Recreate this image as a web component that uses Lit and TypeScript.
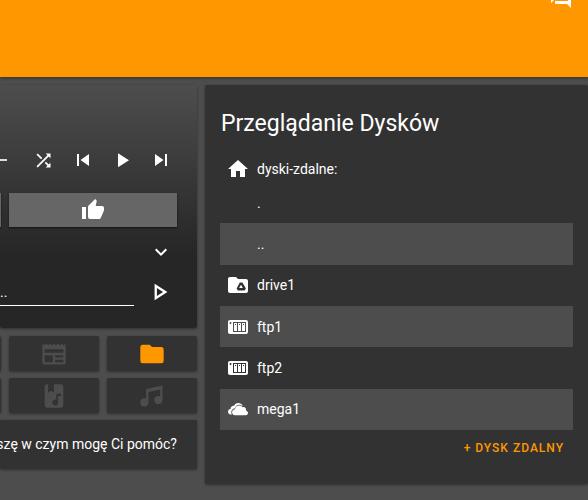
import { LitElement, html, css, svg, nothing } from "lit";
import { customElement, property } from "lit/decorators.js";

const ICONS: Record<string, string> = {
  shuffle:
    "M14.83,13.41L13.42,14.82L16.55,17.95L14.5,20H20V14.5L17.96,16.54L14.83,13.41M14.5,4L16.54,6.04L4,18.59L5.41,20L17.96,7.46L20,9.5V4M10.59,9.17L5.41,4L4,5.41L9.17,10.58L10.59,9.17Z",
  previous: "M6,18V6H8V18H6M9.5,12L18,6V18L9.5,12Z",
  play: "M8,5.14V19.14L19,12.14L8,5.14Z",
  next: "M16,18H18V6H16M6,18L14.5,12L6,6V18Z",
  thumbUp:
    "M23,10C23,8.89 22.1,8 21,8H14.68L15.64,3.43C15.66,3.33 15.67,3.22 15.67,3.11C15.67,2.7 15.5,2.32 15.23,2.05L14.17,1L7.59,7.58C7.22,7.95 7,8.45 7,9V19A2,2 0 0,0 9,21H18C18.83,21 19.54,20.5 19.84,19.78L22.86,12.73C22.95,12.5 23,12.26 23,12V10M1,21H5V9H1V21Z",
  chevron: "M7.41,8.58L12,13.17L16.59,8.58L18,10L12,16L6,10L7.41,8.58Z",
  playOutline: "M8.5,8.64L13.77,12L8.5,15.36V8.64M6.5,5V19L17.5,12",
  newspaper:
    "M20 11H4V8H20M20 15H13V13H20M20 19H13V17H20M11 19H4V13H11M20.33 4.67L18.67 3L17 4.67L15.33 3L13.67 4.67L12 3L10.33 4.67L8.67 3L7 4.67L5.33 3L3.67 4.67L2 3V19C2 20.11 2.9 21 4 21H20C21.11 21 22 20.11 22 19V3L20.33 4.67Z",
  folder:
    "M10,4H4C2.89,4 2,4.89 2,6V18A2,2 0 0,0 4,20H20A2,2 0 0,0 22,18V8C22,6.89 21.1,6 20,6H12L10,4Z",
  bookMusic:
    "M18,22H6A2,2 0 0,1 4,20V4C4,2.89 4.9,2 6,2H7V9L9.5,7.5L12,9V2H18A2,2 0 0,1 20,4V20A2,2 0 0,1 18,22M14,10V15.3A2.5,2.5 0 1,0 15.5,17.5V12H18V10Z",
  music:
    "M21,3V15.5A3.5,3.5 0 0,1 17.5,19A3.5,3.5 0 0,1 14,15.5A3.5,3.5 0 0,1 17.5,12C18.04,12 18.55,12.12 19,12.34V6.47L9,8.6V17.5A3.5,3.5 0 0,1 5.5,21A3.5,3.5 0 0,1 2,17.5A3.5,3.5 0 0,1 5.5,14C6.04,14 6.55,14.12 7,14.34V6L21,3Z",
  forum:
    "M15,4V11H5.17L4,12.17V4H15M16,2H3A1,1 0 0,0 2,3V17L6,13H16A1,1 0 0,0 17,12V3A1,1 0 0,0 16,2M21,6H19V15H6V17A1,1 0 0,0 7,18H18L22,22V7A1,1 0 0,0 21,6Z",
  home: "M10,20V14H14V20H19V12H22L12,3L2,12H5V20H10Z",
  drive:
    "M10,4H4C2.89,4 2,4.89 2,6V18A2,2 0 0,0 4,20H20A2,2 0 0,0 22,18V8C22,6.89 21.1,6 20,6H12L10,4M13.8,9.5H16.4L19.9,15.4L18.6,17.6H11.9L10.6,15.4ZM15,11.8L13.1,15H16.9Z",
  nas: "M4,5C2.89,5 2,5.89 2,7V17C2,18.11 2.89,19 4,19H20C21.11,19 22,18.11 22,17V7C22,5.89 21.11,5 20,5H4M4.5,7A1,1 0 0,1 5.5,8A1,1 0 0,1 4.5,9A1,1 0 0,1 3.5,8A1,1 0 0,1 4.5,7M7,7H20V17H7V7M8,8V16H11V8H8M12,8V16H15V8H12M16,8V16H19V8H16M9,9H10V10H9V9M13,9H14V10H13V9M17,9H18V10H17V9Z",
  cloud:
    "M20.08,13.64C21.17,13.81 22,14.75 22,15.89C22,17.16 21,18.18 19.7,18.18L9.08,18.17C7.42,18.17 6.08,16.82 6.08,15.16C6.08,13.56 7.34,12.25 8.93,12.16C9.21,10.1 10.96,8.5 13.11,8.5C14.47,8.5 15.69,9.15 16.46,10.16C16.8,10.05 17.15,10 17.5,10C19,10 20.08,11.3 20.08,12.84V13.64M8.82,11.28C6.9,11.5 5.3,13.2 5.3,15.2C5.3,16 5.5,16.8 5.9,17.4H4.67C3.19,17.4 2,16.2 2,14.74C2,13.32 3.11,12.16 4.5,12.07C4.41,9.8 6.2,8.5 8,8.7C8.7,7.2 10.3,6 12.3,6C14.6,6 16.4,7.5 16.9,9.2L16.7,9.3C15.8,8.3 14.5,7.7 13.11,7.7C11.1,7.7 9.4,9.2 8.82,11.28Z",
};

@customElement("app-icon")
class AppIcon extends LitElement {
  @property() name = "";
  static styles = css`
    :host { display: block; width: 24px; height: 24px; flex: none; }
    svg { display: block; width: 100%; height: 100%; fill: currentColor; }
  `;
  render() {
    return html`<svg viewBox="0 0 24 24" aria-hidden="true">
      ${svg`<path fill-rule="evenodd" d=${ICONS[this.name] ?? ""}></path>`}
    </svg>`;
  }
}

interface Entry {
  name: string;
  icon?: string;
}

@customElement("app-root")
class AppRoot extends LitElement {
  private entries: Entry[] = [
    { name: "." },
    { name: ".." },
    { name: "drive1", icon: "drive" },
    { name: "ftp1", icon: "nas" },
    { name: "ftp2", icon: "nas" },
    { name: "mega1", icon: "cloud" },
  ];

  private media = [
    { icon: "shuffle", label: "Losowo" },
    { icon: "previous", label: "Poprzedni" },
    { icon: "play", label: "Odtwarzaj" },
    { icon: "next", label: "Następny" },
  ];

  private tiles = [
    [{ label: "Radio" }, { icon: "newspaper", label: "Wiadomości" }, { icon: "folder", label: "Pliki", active: true }],
    [{ label: "Podcasty" }, { icon: "bookMusic", label: "Audiobooki" }, { icon: "music", label: "Muzyka" }],
  ] as { icon?: string; label: string; active?: boolean }[][];

  static styles = css`
    :host {
      display: block;
      min-height: 100vh;
      background: #4d4d4d;
      color: #fff;
      font: 14px/20px Roboto, sans-serif;
      overflow: hidden;
    }
    * { box-sizing: border-box; }
    button, input {
      font: inherit;
      color: inherit;
      background: none;
      border: 0;
      padding: 0;
      margin: 0;
      border-radius: 0;
    }
    button { display: flex; align-items: center; justify-content: center; flex: none; cursor: pointer; }
    .bar {
      display: flex;
      justify-content: flex-end;
      align-items: flex-start;
      height: 77px;
      padding: 0 15px;
      background: #ff9800;
      box-shadow: 0 1px 3px rgba(0, 0, 0, 0.4);
    }
    .bar button { margin-top: -14px; }
    .main {
      display: grid;
      grid-template-columns: minmax(0, 197fr) minmax(0, 383fr);
      gap: 8px;
      padding: 8px 0 16px;
      align-items: start;
    }
    .side { display: flex; flex-direction: column; gap: 7px; }
    .card { background: #323232; box-shadow: 0 1px 3px rgba(0, 0, 0, 0.4); border-radius: 0 0 2px 2px; }
    .player {
      display: flex;
      flex-direction: column;
      padding: 55px 20px 16px 0;
      margin-bottom: 1px;
      background: linear-gradient(#4d4d4d, #262626 70%);
    }
    .line { display: flex; justify-content: flex-end; align-items: center; }
    .media { height: 40px; margin-right: -3px; }
    .media button { width: 39px; height: 40px; }
    .media input {
      appearance: none;
      flex: 1;
      min-width: 0;
      height: 2px;
      margin-right: 17px;
      background: #ddd;
    }
    .media input::-webkit-slider-thumb { appearance: none; width: 0; height: 0; }
    .small { width: 21px; height: 21px; }
    .votes { gap: 8px; margin: 13px 0 5px; }
    .vote {
      width: 168px;
      height: 34px;
      background: #666;
      box-shadow: 0 1px 2px rgba(0, 0, 0, 0.6);
    }
    .line .round { width: 40px; height: 40px; margin-right: -4px; }
    .round .large { width: 28px; height: 28px; }
    .say input {
      flex: 1;
      min-width: 0;
      height: 28px;
      margin-right: 7px;
      border-bottom: 1px solid #fff;
      outline: 0;
    }
    .tiles { display: flex; justify-content: flex-end; gap: 8px; }
    .tile { width: 90px; height: 35px; color: #4d4d4d; border-radius: 2px; }
    .tile app-icon { width: 28px; height: 28px; }
    .active { color: #ff9800; }
    .message {
      display: flex;
      justify-content: flex-end;
      margin: 0;
      padding: 14px 20px 15px 0;
      white-space: nowrap;
    }
    .browser { padding: 23px 15px 18px; border-radius: 2px; }
    h1 { margin: 0 0 15px 1px; font-size: 23px; line-height: 32px; font-weight: 400; }
    .row { display: flex; align-items: center; gap: 7px; padding: 0 6px; text-decoration: none; color: inherit; }
    .row app-icon, .gap { width: 24px; flex: none; }
    .list { display: flex; flex-direction: column; height: 248px; margin: 0; padding: 0; list-style: none; }
    .list li { display: flex; flex: 1; }
    .list li:nth-child(even) { background: #4d4d4d; }
    .list .row { flex: 1; }
    .place { height: 27px; }
    .add {
      height: 36px;
      margin-left: auto;
      padding: 0 9px;
      color: #ff9800;
      font-size: 12px;
      font-weight: 500;
      letter-spacing: 1px;
    }
  `;

  render() {
    return html`
      <header class="bar">
        <button aria-label="Rozmowy"><app-icon name="forum"></app-icon></button>
      </header>
      <main class="main">
        <div class="side">
          <section class="card player">
            <div class="line media">
              <input type="range" aria-label="Głośność" />
              ${this.media.map(
                (m) => html`<button aria-label=${m.label}>
                  <app-icon name=${m.icon} class=${m.icon === "shuffle" ? "small" : ""}></app-icon>
                </button>`
              )}
            </div>
            <div class="line votes">
              <button class="vote" aria-label="Nie lubię"></button>
              <button class="vote" aria-label="Lubię"><app-icon name="thumbUp"></app-icon></button>
            </div>
            <div class="line">
              <button class="round" aria-label="Rozwiń"><app-icon name="chevron"></app-icon></button>
            </div>
            <div class="line say">
              <input type="text" aria-label="Polecenie" value=".." />
              <button class="round" aria-label="Wyślij"><app-icon class="large" name="playOutline"></app-icon></button>
            </div>
          </section>
          ${this.tiles.map(
            (row) => html`<nav class="tiles">
              ${row.map(
                (t) => html`<button class="card tile ${t.active ? "active" : ""}" aria-label=${t.label}>
                  ${t.icon ? html`<app-icon name=${t.icon}></app-icon>` : nothing}
                </button>`
              )}
            </nav>`
          )}
          <p class="card message">szę w czym mogę Ci pomóc?</p>
        </div>
        <section class="card browser">
          <h1>Przeglądanie Dysków</h1>
          <a class="row place" href="#"><app-icon name="home"></app-icon>dyski-zdalne:</a>
          <ul class="list">
            ${this.entries.map(
              (e) => html`<li>
                <a class="row" href="#">
                  ${e.icon ? html`<app-icon name=${e.icon}></app-icon>` : html`<span class="gap"></span>`}
                  ${e.name}
                </a>
              </li>`
            )}
          </ul>
          <button class="add">+ DYSK ZDALNY</button>
        </section>
      </main>
    `;
  }
}
